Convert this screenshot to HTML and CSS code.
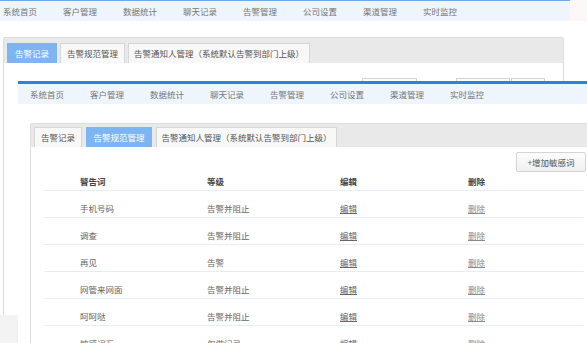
FILE: index.html
```html
<!DOCTYPE html>
<html lang="zh-CN">
<head>
    <meta charset="UTF-8">
    <title>告警管理</title>
    <link rel="stylesheet" href="styles.css">
</head>
<body>
    <div class="screen">
        <!-- older screenshot underneath -->
        <div class="back">
            <div class="back-top">
                <div class="nav back-nav">
                    <span>系统首页</span><span>客户管理</span><span>数据统计</span><span>聊天记录</span>
                    <span>告警管理</span><span>公司设置</span><span>渠道管理</span><span>实时监控</span>
                </div>
                <div class="back-side"></div>
            </div>
            <div class="panel back-panel">
                <div class="tabbar back-tabbar">
                    <span class="tab active w50">告警记录</span>
                    <span class="tab w65">告警规范管理</span>
                    <span class="tab w182">告警通知人管理（系统默认告警到部门上级）</span>
                </div>
                <div class="back-inputs">
                    <span class="box b1"></span><span class="box b2"></span><span class="box b3"></span>
                </div>
            </div>
            <div class="corner"></div>
        </div>

        <!-- newer screenshot on top -->
        <div class="front">
            <div class="nav front-nav">
                <span>系统首页</span><span>客户管理</span><span>数据统计</span><span>聊天记录</span>
                <span>告警管理</span><span>公司设置</span><span>渠道管理</span><span>实时监控</span>
            </div>
            <div class="panel front-panel">
                <div class="tabbar front-tabbar">
                    <span class="tab w48">告警记录</span>
                    <span class="tab active w66">告警规范管理</span>
                    <span class="tab w180">告警通知人管理（系统默认告警到部门上级）</span>
                </div>
                <div class="toolbar">
                    <button class="add-btn">+增加敏感词</button>
                </div>
                <div class="words">
                    <div class="row head">
                        <span>警告词</span><span>等级</span><span>编辑</span><span>删除</span>
                    </div>
                    <div class="row">
                        <span>手机号码</span><span>告警并阻止</span><a>编辑</a><a class="del">删除</a>
                    </div>
                    <div class="row">
                        <span>调查</span><span>告警并阻止</span><a>编辑</a><a class="del">删除</a>
                    </div>
                    <div class="row">
                        <span>再见</span><span>告警</span><a>编辑</a><a class="del">删除</a>
                    </div>
                    <div class="row">
                        <span>网管来网面</span><span>告警并阻止</span><a>编辑</a><a class="del">删除</a>
                    </div>
                    <div class="row">
                        <span>呵呵哒</span><span>告警并阻止</span><a>编辑</a><a class="del">删除</a>
                    </div>
                    <div class="row">
                        <span>敏感词汇</span><span>仅做记录</span><a>编辑</a><a class="del">删除</a>
                    </div>
                </div>
            </div>
        </div>
    </div>
</body>
</html>
```

FILE: styles.css
```css
body {
    margin: 0;
    font-family: 'Noto Sans CJK SC', 'Noto Sans', sans-serif;
    font-size: 8.5px;
    color: #666;
    background: #fff;
}

.screen {
    position: relative;
    width: 587px;
    height: 343px;
    overflow: hidden;
}

/* ---------- shared ---------- */

.nav {
    display: flex;
    height: 20px;
    align-items: center;
    background: #eef5fc;
    color: #777;
}

.nav span {
    width: 60px;
    flex: none;
    white-space: nowrap;
}

.panel {
    border: 1px solid #dcdcdc;
    border-radius: 2px;
    background: #fff;
}

.tabbar {
    display: flex;
    align-items: flex-end;
    background: #e9e9e9;
    gap: 3px;
}

.tab {
    flex: none;
    box-sizing: border-box;
    height: 20px;
    line-height: 18px;
    text-align: center;
    white-space: nowrap;
    background: #f8f8f8;
    border: 1px solid #d6d6d6;
    border-bottom: none;
    color: #555;
}

.tab.active {
    background: #7db5f2;
    border-color: #7db5f2;
    color: #fff;
}

.w48 { width: 48px; }
.w50 { width: 50px; }
.w65 { width: 65px; }
.w66 { width: 66px; }
.w180 { width: 181px; }
.w182 { width: 182px; }

/* ---------- back screenshot ---------- */

.back-top {
    display: flex;
}

.back-nav {
    width: 570px;
    border-top: 1px solid #6aa8ea;
    padding-left: 3px;
    box-sizing: border-box;
    height: 21px;
}

.back-side {
    flex: 1;
    background: #fcf8f8;
}

.back-panel {
    margin: 16px 0 0 3px;
    width: 559px;
    height: 320px;
}

.back-tabbar {
    height: 25px;
    padding-left: 3px;
}

.back-inputs {
    display: flex;
    margin-top: 15px;
}

.box {
    height: 18px;
    border: 1px solid #d4d4d4;
    background: #fbfbfb;
}

.b1 { margin-left: 358px; width: 53px; }
.b2 { margin-left: 39px; width: 52px; }
.b3 { margin-left: 1px; width: 32px; }

.corner {
    position: absolute;
    left: 0;
    top: 315px;
    width: 18px;
    height: 28px;
    background: #f3f3f3;
}

/* ---------- front screenshot ---------- */

.front {
    position: absolute;
    left: 18px;
    top: 81px;
    right: 0;
    bottom: 0;
    background: #fff;
    border-top: 3px solid #2d82dc;
}

.front-nav {
    padding-left: 12px;
}

.front-panel {
    margin: 19px 0 0 12px;
    width: 570px;
    height: 300px;
}

.front-tabbar {
    height: 23px;
    padding-left: 3px;
    gap: 4px;
}

.toolbar {
    display: flex;
    justify-content: flex-end;
    padding: 5px 15px 0 0;
}

.add-btn {
    width: 70px;
    height: 20px;
    padding: 0;
    font-family: inherit;
    font-size: 8.5px;
    color: #555;
    background: linear-gradient(#fdfdfd, #f0f0f0);
    border: 1px solid #d4d4d4;
    border-radius: 2px;
}

.words {
    margin: 0 0 0 13px;
    width: 540px;
}

.row {
    display: grid;
    grid-template-columns: 127px 133px 128px 1fr;
    padding: 8px 0 0 36px;
    height: 18px;
    line-height: 18px;
    border-bottom: 1px solid #e5edf7;
}

.row.head {
    padding-top: 0;
    font-weight: bold;
    color: #444;
}

.row a {
    color: #666;
    text-decoration: underline;
}

.row a.del {
    color: #8a8a8a;
}
```
